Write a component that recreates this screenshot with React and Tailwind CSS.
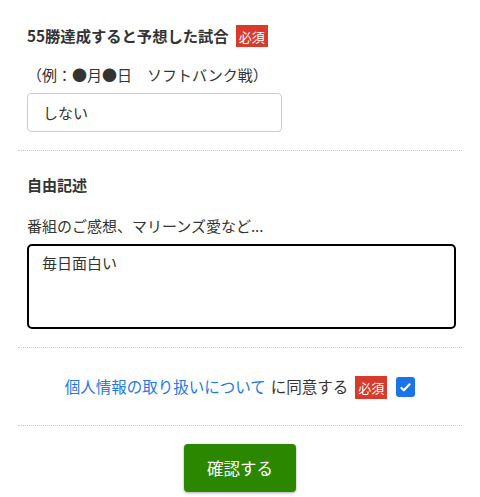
export default function App() {
  return (
    <div
      className="min-h-[497px] bg-white px-[18px] text-[#333]"
      style={{ fontFamily: '"Noto Sans CJK JP", "Noto Sans", sans-serif' }}
    >
      <div className="px-[9px] pt-[25px]">
        <div className="flex h-[22px] items-center">
          <h2 className="text-[15.3px] font-bold leading-none">55勝達成すると予想した試合</h2>
          <span className="ml-[7px] flex h-[22px] items-center bg-[#d83b2b] px-[3px] text-[13px] leading-none text-white">必須</span>
        </div>
        <p className="mt-[17px] h-[22px] text-[15px] leading-[22px]">（例：●月●日　ソフトバンク戦）</p>
        <input
          type="text"
          defaultValue="しない"
          className="mt-[7px] h-[39px] w-[255px] rounded-[4px] border border-[#ccc] px-[15px] text-[15px] text-[#333] outline-none"
        />
      </div>
      <div className="mt-[18px] border-t border-dotted border-[#ccc]" />

      <div className="px-[9px] pt-[23px]">
        <h2 className="h-[22px] text-[15px] font-bold leading-[22px]">自由記述</h2>
        <p className="mt-[19px] h-[22px] text-[15px] leading-[22px]">番組のご感想、マリーンズ愛など...</p>
        <textarea
          defaultValue="毎日面白い"
          className="mt-[7px] block h-[85px] w-[429px] resize-none rounded-[5px] border-2 border-black px-[13px] py-[6px] text-[15px] text-[#333] outline-none"
        />
      </div>
      <div className="mt-[18px] border-t border-dotted border-[#ccc]" />

      <div className="flex h-[77px] items-center justify-center pt-[1px]">
        <a href="#" className="text-[15.5px] text-[#1f7ae3]">個人情報の取り扱いについて</a>
        <span className="ml-[5px] text-[15.5px]">に同意する</span>
        <span className="ml-[7px] flex h-[23px] items-center bg-[#d83b2b] px-[3px] text-[13px] leading-none text-white">必須</span>
        <span className="ml-[9px] flex h-[20px] w-[19px] items-center justify-center rounded-[3px] bg-[#1a73e8]">
          <svg viewBox="0 0 16 16" className="h-[13px] w-[13px]" fill="none" stroke="white" strokeWidth="2.6" strokeLinecap="round" strokeLinejoin="round">
            <path d="M3 8.5l3 3 7-7.5" />
          </svg>
        </span>
      </div>
      <div className="border-t border-dotted border-[#ccc]" />

      <div className="flex justify-center pt-[18px]">
        <button
          type="button"
          className="h-[48px] w-[112px] rounded-[4px] bg-[#2b8700] text-[16.5px] text-white shadow-[0_1px_3px_rgba(0,0,0,0.35)]"
        >
          確認する
        </button>
      </div>
    </div>
  );
}
